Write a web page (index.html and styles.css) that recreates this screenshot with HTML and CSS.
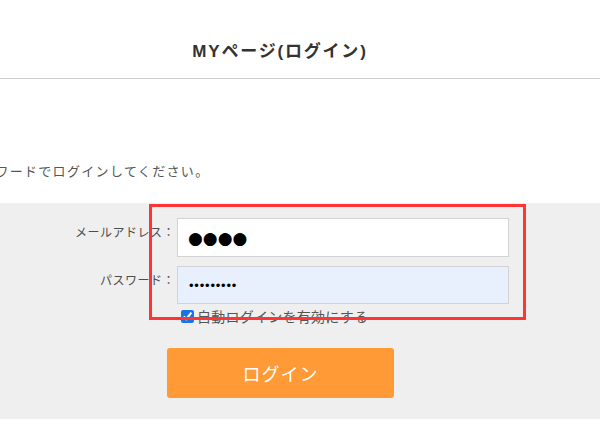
FILE: index.html
```html
<!DOCTYPE html>
<html lang="ja">
<head>
<meta charset="utf-8">
<title>MYページ(ログイン)</title>
<link rel="stylesheet" href="styles.css">
</head>
<body>
<header class="page-header">
  <h1 class="page-title">MYページ(ログイン)</h1>
</header>
<main class="page-main">
  <p class="lead">メールアドレスとパスワードでログインしてください。</p>
  <section class="login-panel">
    <form class="login-form">
      <label class="field-label" for="email">メールアドレス：</label>
      <input class="field-input field-email" id="email" type="text" value="●●●●">
      <label class="field-label" for="pw">パスワード：</label>
      <input class="field-input field-password" id="pw" type="password" value="123456789">
      <div class="auto-login">
        <input class="auto-check" id="auto" type="checkbox" checked>
        <label class="auto-text" for="auto">自動ログインを有効にする</label>
      </div>
      <div class="submit-row">
        <button class="login-button" type="button">ログイン</button>
      </div>
    </form>
    <div class="highlight-box"></div>
  </section>
</main>
</body>
</html>
```

FILE: styles.css
```css
* { box-sizing: border-box; }

html, body {
  margin: 0;
  padding: 0;
  background: #fff;
  width: 600px;
  height: 427px;
  overflow: hidden;
  font-family: "Liberation Sans", "Noto Sans CJK JP", sans-serif;
  color: #555;
}

.page-header {
  width: 600px;
  padding: 40px 40px 14px 0;
  border-bottom: 1px solid #cccccc;
}

.page-title {
  margin: 0;
  text-align: center;
  font-size: 17px;
  line-height: 24px;
  font-weight: bold;
  letter-spacing: 1.8px;
  color: #333;
}

.page-main {
  padding-top: 82px;
}

.lead {
  margin: 0 0 22px -148px;
  font-size: 13px;
  line-height: 20px;
  letter-spacing: 1.33px;
  white-space: nowrap;
  color: #555;
  font-family: "Noto Sans CJK JP", sans-serif;
}

.login-panel {
  position: relative;
  background: #efefef;
  padding: 15px 0 21px 0;
  width: 600px;
}

.login-form {
  display: grid;
  grid-template-columns: 175px 332px 50px;
  column-gap: 2px;
  row-gap: 9px;
  width: 561px;
}

.field-label {
  grid-column: 1;
  justify-self: end;
  padding-top: 5px;
  font-size: 12px;
  line-height: 18px;
  letter-spacing: 0.5px;
  color: #4d4d4d;
  font-family: "Noto Sans CJK JP", sans-serif;
}

.field-input {
  grid-column: 2;
  margin: 0;
  width: 332px;
  border: 1px solid #d3d3d3;
  outline: none;
  padding: 0 0 0 10px;
  color: #000;
}

.field-email {
  height: 39px;
  background: #fff;
  font-family: "DejaVu Sans", sans-serif;
  font-size: 17px;
}

.field-password {
  height: 38px;
  background: #e8f0fe;
  font-family: "Liberation Sans", sans-serif;
  font-size: 13px;
  letter-spacing: 0.8px;
  padding-left: 11px;
}

.auto-login {
  grid-column: 2;
  margin-top: -5px;
  display: flex;
  align-items: center;
  height: 16px;
}

.auto-check {
  margin: 0 3px 0 4px;
  width: 13px;
  height: 13px;
  accent-color: #1a73e8;
}

.auto-text {
  font-size: 14px;
  line-height: 16px;
  letter-spacing: 0.25px;
  color: #555;
  font-family: "Noto Sans CJK JP", sans-serif;
}

.submit-row {
  grid-column: 1 / -1;
  display: flex;
  justify-content: center;
  margin-top: 15px;
}

.login-button {
  width: 227px;
  height: 50px;
  border: 0;
  border-radius: 3px;
  background: #ff9a36;
  color: #fff;
  font-size: 18px;
  letter-spacing: 1px;
  font-family: "Noto Sans CJK JP", sans-serif;
}

.highlight-box {
  position: absolute;
  left: 149px;
  top: 1px;
  width: 377px;
  height: 116px;
  border: 3px solid #ff3535;
  pointer-events: none;
}
```
